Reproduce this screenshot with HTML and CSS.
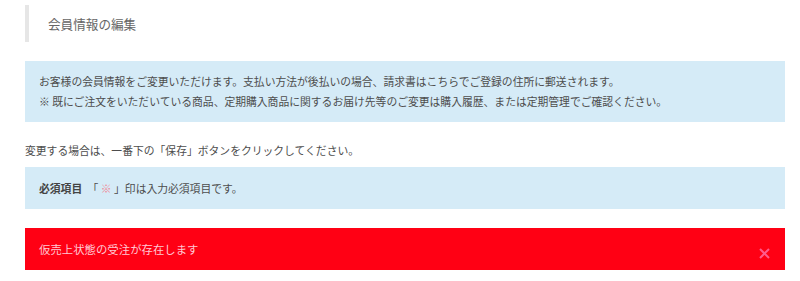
FILE: index.html
```html
<!DOCTYPE html>
<html lang="ja">
<head>
<meta charset="utf-8">
<title>会員情報の編集</title>
<link rel="stylesheet" href="styles.css">
</head>
<body>
<div class="page">
  <h2 class="page-title">会員情報の編集</h2>
  <div class="info-box info-box--notice">
    <p>お客様の会員情報をご変更いただけます。支払い方法が後払いの場合、請求書はこちらでご登録の住所に郵送されます。</p>
    <p>※ 既にご注文をいただいている商品、定期購入商品に関するお届け先等のご変更は購入履歴、または定期管理でご確認ください。</p>
  </div>
  <p class="lead">変更する場合は、一番下の「保存」ボタンをクリックしてください。</p>
  <div class="info-box info-box--required">
    <p><strong class="req-label">必須項目</strong> 「 <span class="req-mark">※</span> 」印は入力必須項目です。</p>
  </div>
  <div class="alert">
    <span class="alert-text">仮売上状態の受注が存在します</span>
    <span class="alert-close" aria-label="閉じる">
      <svg width="11" height="11" viewBox="0 0 11 11"><path d="M1 1 L10 10 M10 1 L1 10" stroke="#ff5a8c" stroke-width="2" fill="none"/></svg>
    </span>
  </div>
</div>
</body>
</html>
```

FILE: styles.css
```css
html, body {
  margin: 0;
  padding: 0;
  background: #fff;
}
body {
  font-family: "Noto Sans CJK JP", "Noto Sans", sans-serif;
  color: #4d4d4d;
  font-size: 10.8px;
}
p { margin: 0; }
.page {
  padding: 5px 15px 0 25px;
}
.page-title {
  margin: 0;
  height: 37px;
  line-height: 37px;
  border-left: 4px solid #e6e6e6;
  padding-left: 19px;
  font-size: 12.6px;
  font-weight: normal;
  color: #666;
}
.info-box {
  background: #d5ebf7;
  padding: 11px 14px;
  line-height: 19.5px;
}
.info-box--notice {
  margin-top: 19px;
}
.lead {
  margin-top: 18px;
  line-height: 20px;
}
.info-box--required {
  margin-top: 7px;
  line-height: 20px;
}
.req-label {
  font-weight: bold;
  color: #444;
  margin-right: 3px;
}
.req-mark {
  color: #f08a96;
}
.alert {
  margin-top: 19px;
  height: 42px;
  background: #ff0014;
  display: flex;
  align-items: center;
  justify-content: space-between;
  padding: 0 15px 0 14px;
  box-sizing: border-box;
}
.alert-text {
  color: #ffc8d4;
  font-size: 11.4px;
  margin-top: -1px;
}
.alert-close {
  display: flex;
  margin-top: 8px;
}
```
